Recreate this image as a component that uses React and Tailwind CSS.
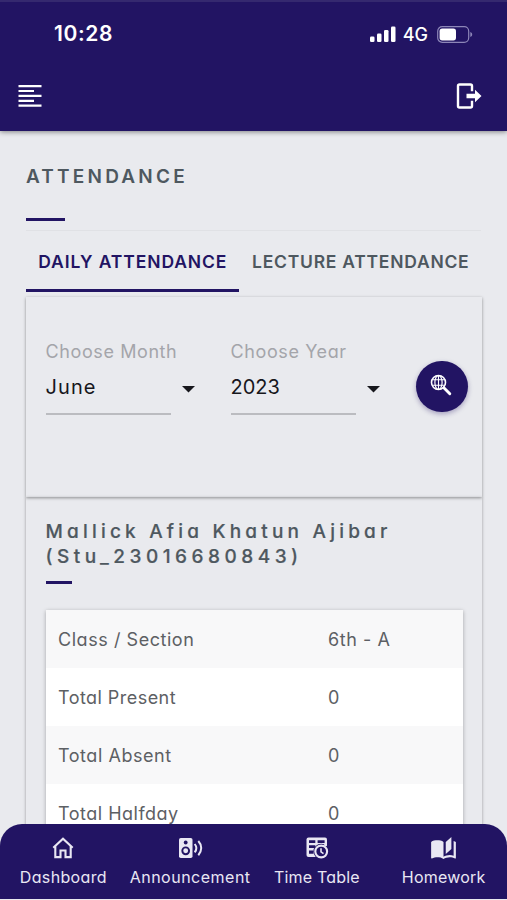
const rows = [
  { label: 'Class / Section', value: '6th - A', tracking: 'tracking-[0.55px]' },
  { label: 'Total Present', value: '0', tracking: 'tracking-[0.45px]' },
  { label: 'Total Absent', value: '0', tracking: 'tracking-[0.55px]' },
  { label: 'Total Halfday', value: '0', tracking: 'tracking-[0.5px]' },
];

const MenuIcon = () => (
  <svg width="24" height="24" viewBox="0 0 24 24" fill="currentColor">
    <path d="M0.500 1h23v2.200h-23zM0.500 5.900h15.500v2.200H0.500zM0.500 10.800h23v2.200h-23zM0.500 15.700h15.500v2.200H0.500zM0.500 20.600h23v2.200h-23z" />
  </svg>
);

const SignalIcon = () => (
  <svg width="27" height="17" viewBox="0 0 27 17" fill="currentColor">
    <rect x="1" y="10.5" width="4.5" height="5.5" rx="1.3" />
    <rect x="8" y="7.5" width="4.5" height="8.5" rx="1.3" />
    <rect x="15" y="4" width="4.5" height="12" rx="1.3" />
    <rect x="22" y="0.5" width="4.5" height="15.5" rx="1.3" />
  </svg>
);

const BatteryIcon = () => (
  <svg width="36" height="17" viewBox="0 0 36 17" fill="none">
    <rect x="0.7" y="0.7" width="31" height="15.6" rx="4.5" stroke="#8d86b8" strokeWidth="1.2" />
    <rect x="2.6" y="2.6" width="16.4" height="11.8" rx="2.6" fill="#fff" />
    <path d="M33.3 6v5c1.3-.5 1.9-1.4 1.9-2.5S34.6 6.5 33.3 6z" fill="#8d86b8" />
  </svg>
);

const LogoutIcon = () => (
  <svg width="26" height="26" viewBox="0 0 26 26" fill="none">
    <path
      d="M16 8.2V3a1.500 1.500 0 0 0-1.500-1.500h-11A1.500 1.500 0 0 0 2 3v20a1.500 1.500 0 0 0 1.500 1.500h11A1.500 1.500 0 0 0 16 23v-5.200"
      stroke="currentColor"
      strokeWidth="2.4"
    />
    <path d="M10.500 10.700h8.500V6.800l6.500 6.200-6.500 6.200v-3.900h-8.500z" fill="currentColor" />
  </svg>
);

const GlobeSearchIcon = () => (
  <svg width="22" height="22" viewBox="0 0 22 22" fill="none" stroke="currentColor">
    <circle cx="8.5" cy="8.5" r="7" strokeWidth="1.6" />
    <ellipse cx="8.5" cy="8.5" rx="3.6" ry="7" strokeWidth="1.2" />
    <path d="M8.500 1.500v14M2.200 5.700h12.600M2.200 11.300h12.600" strokeWidth="1.100" />
    <path d="M13.800 13.800l6 6" strokeWidth="2.9" strokeLinecap="round" />
  </svg>
);

const HomeIcon = () => (
  <svg width="22" height="22" viewBox="0 0 22 22" fill="none" stroke="currentColor" strokeWidth="2.1">
    <path d="M1.300 10.800L11 1.800l9.700 9" />
    <path d="M3.300 9.300v10.800h5.200v-6.600h5v6.600h5.200V9.300" />
  </svg>
);

const SpeakerIcon = () => (
  <svg width="26" height="22" viewBox="0 0 26 22" fill="none">
    <rect x="2" y="1" width="13.5" height="20" rx="1.8" fill="currentColor" />
    <circle cx="8.7" cy="5.5" r="1.9" fill="#221463" />
    <circle cx="8.7" cy="13.8" r="3.4" stroke="#221463" strokeWidth="1.9" />
    <path d="M17.700 7c2 2.500 2 5.800 0 8.300M21.300 4c3.900 4.200 3.900 10 0 14.200" stroke="currentColor" strokeWidth="2" />
  </svg>
);

const TimetableIcon = () => (
  <svg width="24" height="22" viewBox="0 0 24 22" fill="none">
    <rect x="1.5" y="0.5" width="20.5" height="19.5" rx="2" fill="currentColor" />
    <circle cx="16.2" cy="14.5" r="7.8" fill="#221463" />
    <path d="M20.500 3v6" stroke="currentColor" strokeWidth="2.5" />
    <path
      d="M4 3.200h6.300v2.800H4zM12.600 3.200h7v2.800h-7zM4 8.300h6.300v2.700H4zM4 13.500h4.500v3.200H4z"
      fill="#221463"
    />
    <circle cx="16.2" cy="14.5" r="5.9" stroke="currentColor" strokeWidth="2.1" fill="#221463" />
    <path d="M16 11.200v3.600l2.500 1.900" stroke="currentColor" strokeWidth="1.6" />
  </svg>
);

const BookIcon = () => (
  <svg width="27" height="24" viewBox="0 1 24 22" preserveAspectRatio="none" fill="currentColor">
    <path d="M19 2L14 6.500V17.500L19 13V2M6.500 5C4.550 5 2.450 5.400 1 6.500V21.160C1 21.410 1.250 21.660 1.500 21.660C1.600 21.660 1.650 21.590 1.750 21.590C3.100 20.940 5.050 20.500 6.500 20.500C8.450 20.500 10.550 20.900 12 22C13.350 21.150 15.800 20.500 17.500 20.500C19.150 20.500 20.850 20.810 22.250 21.560C22.350 21.610 22.400 21.590 22.500 21.590C22.750 21.590 23 21.340 23 21.090V6.500C22.400 6.050 21.750 5.750 21 5.500V19C19.900 18.650 18.700 18.500 17.500 18.500C15.800 18.500 13.350 19.150 12 20V6.500C10.550 5.400 8.450 5 6.500 5Z" />
  </svg>
);

const navItems = [
  { label: 'Dashboard', Icon: HomeIcon, tracking: 'tracking-[0.35px]' },
  { label: 'Announcement', Icon: SpeakerIcon, tracking: 'tracking-[0.5px]' },
  { label: 'Time Table', Icon: TimetableIcon, tracking: 'tracking-[0.2px]' },
  { label: 'Homework', Icon: BookIcon, tracking: 'tracking-[0.2px]' },
];

const Select = ({ label, value, tracking, className }) => (
  <div className={className}>
    <p className="text-[18px] leading-6 tracking-[0.6px] text-[#a4a5aa]">{label}</p>
    <div className="mt-[9px] flex items-center justify-between">
      <span className={`text-[20px] leading-7 text-[#17171c] ${tracking}`}>{value}</span>
      <svg width="13" height="7" viewBox="0 0 13 7" className="mt-1.5 text-[#17171c]" fill="currentColor">
        <path d="M0 0h13L6.500 6.500z" />
      </svg>
    </div>
    <div className="mt-3 h-[2px] w-[125px] bg-[#bbbcc0]" />
  </div>
);

export default function App() {
  return (
    <div className="flex h-[900px] w-[507px] flex-col overflow-hidden bg-[#e9eaee] font-['Inter',sans-serif] [font-feature-settings:'cv11']">
      <header className="z-10 h-[131px] shrink-0 border-t-2 border-[#35296f] bg-[#221463] text-white shadow-[0_1px_5px_rgba(0,0,0,0.45)]">
        <div className="flex h-[64px] items-center justify-between pr-[34px] pl-[54px]">
          <span className="text-[21px] font-semibold tracking-[0.6px]">10:28</span>
          <div className="flex items-center">
            <SignalIcon />
            <span className="ml-[7px] text-[18px] font-medium">4G</span>
            <span className="ml-[9px]">
              <BatteryIcon />
            </span>
          </div>
        </div>
        <div className="flex h-[60px] items-center justify-between pr-[25px] pl-[18px]">
          <MenuIcon />
          <LogoutIcon />
        </div>
      </header>

      <main className="h-[693px] shrink-0 overflow-hidden px-[26px] pt-[34px]">
        <h1 className="text-[19px] leading-6 font-semibold tracking-[3.2px] text-[#4e585f]">ATTENDANCE</h1>
        <div className="mt-[29px] h-[2.5px] w-[39px] bg-[#221463]" />
        <div className="mt-[9px] h-px bg-[#e0e1e5]" />

        <div className="flex h-[61px] text-[17.5px] font-semibold whitespace-nowrap">
          <div className="flex w-[213px] items-center justify-center border-b-3 border-[#221463] pt-[5px] pl-px tracking-[0.9px] text-[#221463]">
            DAILY ATTENDANCE
          </div>
          <div className="flex w-[243px] items-center justify-center border-b-3 border-transparent pt-[5px] pl-0.5 tracking-[0.75px] text-[#4e585f]">
            LECTURE ATTENDANCE
          </div>
        </div>

        <section className="mt-[5px] flex h-[200px] w-[456px] pt-[43px] pl-[19.5px] shadow-[0_1px_3px_rgba(0,0,0,0.4)]">
          <Select label="Choose Month" value="June" tracking="tracking-[1.1px]" className="w-[149px]" />
          <Select label="Choose Year" value="2023" tracking="tracking-[0px]" className="ml-9 w-[149px]" />
          <button className="mt-[21px] ml-9 flex h-[51px] w-[52px] items-center justify-center rounded-full bg-[#221463] pr-0.5 pb-0.5 text-white shadow-[0_2px_5px_rgba(34,20,99,0.35)]">
            <GlobeSearchIcon />
          </button>
        </section>

        <section className="h-[400px] w-[456px] px-[19.5px] pt-[22px] shadow-[0_1px_3px_rgba(0,0,0,0.35)]">
          <h2 className="text-[19px] leading-[25px] font-medium whitespace-nowrap text-[#4e585f] [-webkit-text-stroke:0.2px_#4e585f]">
            <span className="block tracking-[4.2px]">Mallick Afia Khatun Ajibar</span>
            <span className="block tracking-[4.5px]">(Stu_23016680843)</span>
          </h2>
          <div className="mt-3 h-[3px] w-[26px] bg-[#221463]" />
          <div className="mt-[26px] bg-white shadow-[0_1px_4px_rgba(0,0,0,0.3)]">
            {rows.map((row) => (
              <div
                key={row.label}
                className="flex h-[58px] items-center pt-0.5 pl-[12.5px] text-[18px] text-[#5d6064] odd:bg-[#f8f8f9]"
              >
                <span className={`w-[270px] ${row.tracking}`}>{row.label}</span>
                <span className={row.tracking}>{row.value}</span>
              </div>
            ))}
          </div>
        </section>
      </main>

      <nav className="flex h-[75px] shrink-0 rounded-t-[22px] bg-[#221463] text-[#e9e7f3]">
        {navItems.map(({ label, Icon, tracking }) => (
          <div key={label} className="flex w-1/4 flex-col items-center pt-3">
            <div className="flex h-6 items-center">
              <Icon />
            </div>
            <span className={`mt-[5px] text-[16px] leading-6 ${tracking}`}>{label}</span>
          </div>
        ))}
      </nav>
    </div>
  );
}
